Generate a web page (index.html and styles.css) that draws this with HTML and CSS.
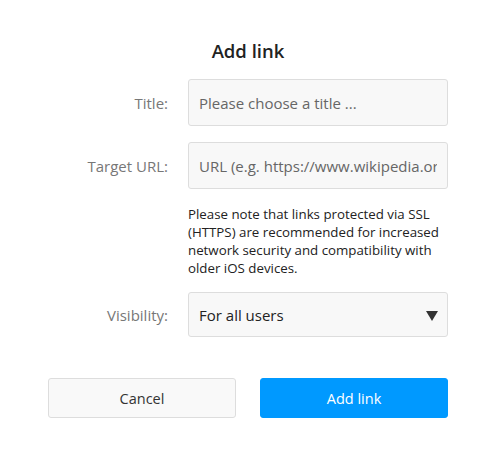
FILE: index.html
```html
<!DOCTYPE html>
<html>
<head>
<meta charset="utf-8">
<link rel="stylesheet" href="styles.css">
</head>
<body>
<div class="dialog">
  <h1 class="title">Add link</h1>
  <div class="form">
    <div class="row">
      <label class="label">Title:</label>
      <div class="field"><input class="input" type="text" placeholder="Please choose a title ..."></div>
    </div>
    <div class="row">
      <label class="label">Target URL:</label>
      <div class="field">
        <input class="input" type="text" placeholder="URL (e.g. https://www.wikipedia.org)">
      </div>
    </div>
    <div class="row note-row">
      <div></div>
      <p class="note">Please note that links protected via SSL (HTTPS) are recommended for increased network security and compatibility with older iOS devices.</p>
    </div>
    <div class="row">
      <label class="label">Visibility:</label>
      <div class="field">
        <div class="select"><span>For all users</span><span class="caret"></span></div>
      </div>
    </div>
  </div>
  <div class="buttons">
    <button class="btn btn-cancel">Cancel</button>
    <button class="btn btn-primary">Add link</button>
  </div>
</div>
</body>
</html>
```
FILE: styles.css
```css
html, body {
  margin: 0;
  padding: 0;
  background: #fff;
}
body {
  font-family: "Open Sans", "Noto Sans", sans-serif;
  width: 498px;
  height: 469px;
  overflow: hidden;
}
.dialog {
  padding: 39px 50px 0 48px;
}
.title {
  margin: 0 0 16px 0;
  font-size: 18.5px;
  line-height: 24px;
  font-weight: 600;
  color: #222;
  text-align: center;
  padding-left: 0;
}
.form {
  display: flex;
  flex-direction: column;
  gap: 16px;
}
.row {
  display: grid;
  grid-template-columns: 120px 260px;
  column-gap: 20px;
  align-items: center;
}
.label {
  text-align: right;
  font-size: 15px;
  color: #777;
  line-height: 20px;
}
.input {
  box-sizing: border-box;
  display: block;
  width: 260px;
  height: 47px;
  margin: 0;
  border: 1px solid #ddd;
  border-radius: 3px;
  background: #f8f8f8;
  padding: 0 10px;
  font-family: inherit;
  font-size: 15px;
  color: #222;
  outline: none;
}
.input::placeholder {
  color: #666;
  opacity: 1;
}
.note {
  margin: 0;
  font-size: 13.3px;
  line-height: 18px;
  color: #222;
  margin-bottom: -1px;
}
.select {
  box-sizing: border-box;
  height: 45px;
  border: 1px solid #ddd;
  border-radius: 3px;
  background: #f8f8f8;
  padding: 0 9px 0 10px;
  display: flex;
  align-items: center;
  justify-content: space-between;
  font-size: 15px;
  color: #222;
}
.caret {
  width: 0;
  height: 0;
  border-left: 6.5px solid transparent;
  border-right: 6.5px solid transparent;
  border-top: 10px solid #333;
  margin-top: 2px;
}
.buttons {
  display: grid;
  grid-template-columns: 188px 188px;
  column-gap: 24px;
  margin-top: 41px;
}
.btn {
  box-sizing: border-box;
  height: 40px;
  border-radius: 3px;
  font-family: inherit;
  font-size: 14.5px;
  cursor: pointer;
  margin: 0;
}
.btn-cancel {
  background: #f9f9f9;
  border: 1px solid #ddd;
  color: #333;
}
.btn-primary {
  background: #0099ff;
  border: 1px solid #0099ff;
  color: #fff;
}
```
